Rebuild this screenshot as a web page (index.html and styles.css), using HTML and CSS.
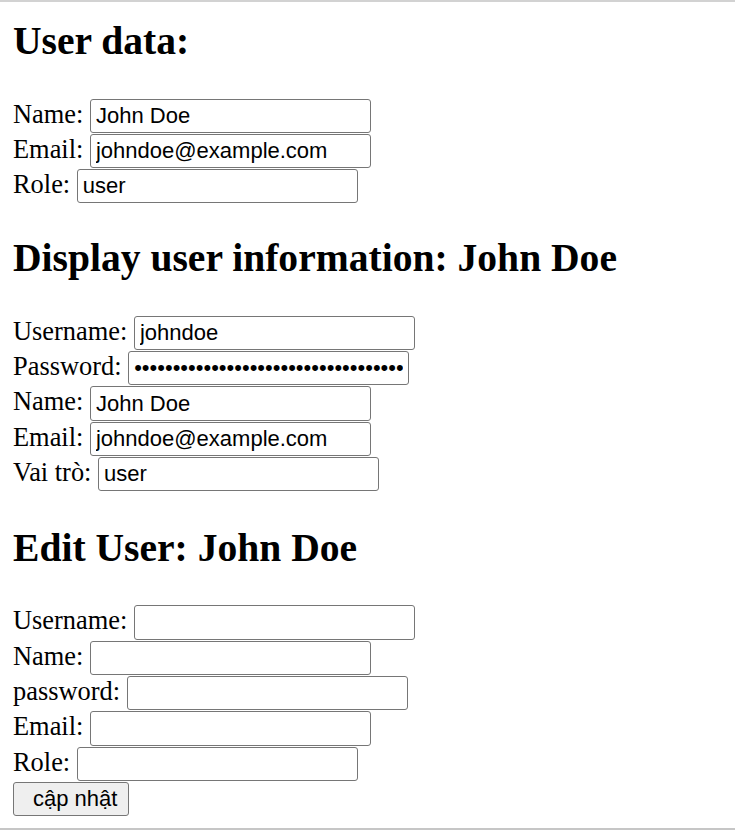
FILE: index.html
```html
<!DOCTYPE html>
<html lang="en">
<head>
<meta charset="utf-8">
<title>User</title>
<link rel="stylesheet" href="styles.css">
</head>
<body>
<div class="page">
  <h2 class="title first">User data:</h2>
  <div class="fields">
    <div class="row"><label>Name:</label> <input class="field" type="text" value="John Doe"></div>
    <div class="row"><label>Email:</label> <input class="field" type="text" value="johndoe@example.com"></div>
    <div class="row"><label>Role:</label> <input class="field" type="text" value="user"></div>
  </div>

  <h2 class="title">Display user information: John Doe</h2>
  <div class="fields">
    <div class="row"><label>Username:</label> <input class="field" type="text" value="johndoe"></div>
    <div class="row"><label>Password:</label> <input class="field" type="password" value="$2y$10$abcdefghijklmnopqrstuvwxyzABCDEFGHIJKLMNOPQRSTUVWXYZ012"></div>
    <div class="row"><label>Name:</label> <input class="field" type="text" value="John Doe"></div>
    <div class="row"><label>Email:</label> <input class="field" type="text" value="johndoe@example.com"></div>
    <div class="row"><label>Vai trò:</label> <input class="field" type="text" value="user"></div>
  </div>

  <h2 class="title last">Edit User: John Doe</h2>
  <form class="fields">
    <div class="row"><label>Username:</label> <input class="field" type="text"></div>
    <div class="row"><label>Name:</label> <input class="field" type="text"></div>
    <div class="row"><label>password:</label> <input class="field" type="password"></div>
    <div class="row"><label>Email:</label> <input class="field" type="text"></div>
    <div class="row"><label>Role:</label> <input class="field" type="text"></div>
    <div class="row btn-row"><button class="btn" type="button">cập nhật</button></div>
  </form>
</div>
</body>
</html>
```

FILE: styles.css
```css
html, body {
  margin: 0;
  padding: 0;
  background: #ffffff;
}

.page {
  box-sizing: border-box;
  height: 830px;
  border-top: 2px solid #d2d2d2;
  border-bottom: 2px solid #c6c6c6;
  padding: 18px 13px 0 13px;
  font-family: "Liberation Serif", "Times New Roman", serif;
  font-size: 26.4px;
  color: #000000;
  overflow: hidden;
}

.title {
  font-size: 39.6px;
  font-weight: bold;
  line-height: 43px;
  margin: 33px 0 35.5px 0;
}

.title.first {
  margin-top: 0;
}

.title.last {
  margin-top: 34.5px;
}

.fields {
  margin: 0;
}

.row {
  height: 35.3px;
  line-height: 28px;
  white-space: nowrap;
}

.field {
  box-sizing: border-box;
  width: 281px;
  height: 34.3px;
  margin: 0;
  padding: 0 5px;
  border: 1px solid #767676;
  border-radius: 3px;
  background: #ffffff;
  font-family: "Liberation Sans", Arial, sans-serif;
  font-size: 22px;
  color: #000000;
  vertical-align: baseline;
}

.btn-row {
  padding-top: 0;
}

.btn {
  box-sizing: border-box;
  height: 34px;
  margin: 0;
  padding: 0 11px 0 19px;
  border: 1px solid #767676;
  border-radius: 3px;
  background: #efefef;
  font-family: "Liberation Sans", Arial, sans-serif;
  font-size: 22px;
  color: #000000;
  vertical-align: top;
}
```
